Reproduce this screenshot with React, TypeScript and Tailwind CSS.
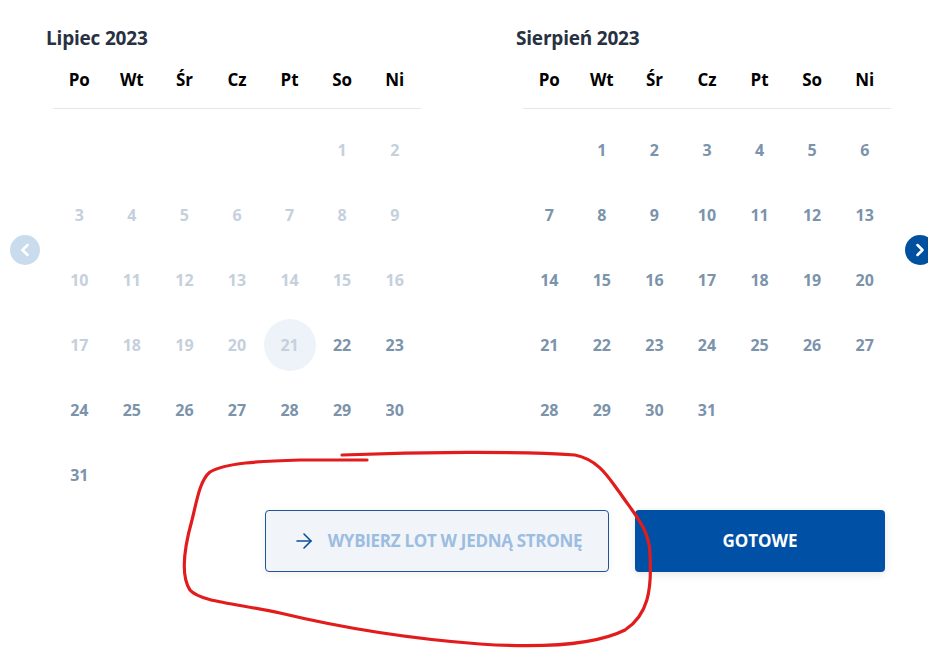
import { ChevronLeft, ChevronRight, ArrowRight } from 'lucide-react';

const weekDays = ['Po', 'Wt', 'Śr', 'Cz', 'Pt', 'So', 'Ni'];

type Month = {
  title: string;
  offset: number; // empty cells before day 1
  days: number;
  disabledUntil: number; // days before this are disabled
  selected?: number;
};

const months: Month[] = [
  { title: 'Lipiec 2023', offset: 5, days: 31, disabledUntil: 22, selected: 21 },
  { title: 'Sierpień 2023', offset: 1, days: 31, disabledUntil: 0 },
];

function MonthView({ month }: { month: Month }) {
  const cells: (number | null)[] = [];
  for (let i = 0; i < month.offset; i++) cells.push(null);
  for (let d = 1; d <= month.days; d++) cells.push(d);

  return (
    <div className="w-[384px]">
      <h3 className="h-[28px] text-[19px] leading-[28px] font-bold text-[#273142] tracking-[-0.2px]">{month.title}</h3>
      <div className="ml-[7px] w-[368px]">
        <div className="grid grid-cols-7 h-[57px] items-center border-b border-[#e3e6ea]">
          {weekDays.map((d) => (
            <div key={d} className="text-center text-[17px] font-bold text-black">
              {d}
            </div>
          ))}
        </div>
        <div className="grid grid-cols-7 pt-[8px]">
          {cells.map((d, i) => (
            <div key={i} className="h-[65px] flex items-center justify-center">
              {d !== null && (
                <span
                  className={
                    'w-[52px] h-[52px] rounded-full flex items-center justify-center text-base font-bold ' +
                    (d === month.selected ? 'bg-[#eef3f9] ' : '') +
                    (d < month.disabledUntil ? 'text-[#c5d0dc]' : 'text-[#7b93ab]')
                  }
                >
                  {d}
                </span>
              )}
            </div>
          ))}
        </div>
      </div>
    </div>
  );
}

export default function App() {
  return (
    <div
      className="relative w-[928px] h-[651px] overflow-hidden bg-white"
      style={{ fontFamily: '"Open Sans", "Noto Sans", sans-serif' }}
    >
      <div className="flex gap-[86px] pl-[46px] pt-[24px]">
        {months.map((m) => (
          <MonthView key={m.title} month={m} />
        ))}
      </div>

      <div className="flex justify-end gap-[26px] pr-[43px] mt-[3px]">
        <button className="w-[344px] h-[62px] flex items-center justify-center gap-[12px] rounded-[4px] border border-[#1d5598] bg-[#f1f4f9] shadow-[0_2px_8px_rgba(0,0,0,0.06)]">
          <ArrowRight size={24} strokeWidth={1.6} className="text-[#0b4f9c]" />
          <span className="text-[17px] font-bold text-[#9cbde0] tracking-[-0.3px]">WYBIERZ LOT W JEDNĄ STRONĘ</span>
        </button>
        <button className="w-[250px] h-[62px] flex items-center justify-center rounded-[4px] bg-[#0051a5] text-white text-[17px] font-bold shadow-[0_2px_8px_rgba(0,0,0,0.1)]">
          GOTOWE
        </button>
      </div>

      {/* nav arrows */}
      <button className="absolute left-[10px] top-[235px] w-[30px] h-[30px] rounded-full bg-[#c9dcee] flex items-center justify-center">
        <ChevronLeft size={20} strokeWidth={3} className="text-white" />
      </button>
      <button className="absolute left-[905px] top-[235px] w-[30px] h-[30px] rounded-full bg-[#0050a0] flex items-center justify-center">
        <ChevronRight size={20} strokeWidth={3} className="text-white" />
      </button>

      {/* red annotation */}
      <svg className="absolute inset-0 pointer-events-none" width="928" height="651" viewBox="0 0 928 651">
        <path
          d="M342,455 C420,452 520,451 575,455 C600,460 610,480 620,493 C635,515 650,530 650,555 C652,590 648,615 625,630 C595,645 540,648 480,644 C400,638 330,625 280,613 C240,604 200,602 190,590 C180,575 185,545 192,520 C197,500 200,480 210,472 C225,463 260,461 300,460 L367,460"
          fill="none"
          stroke="#e21c1c"
          strokeWidth="3.2"
          strokeLinecap="round"
          strokeLinejoin="round"
        />
      </svg>
    </div>
  );
}
